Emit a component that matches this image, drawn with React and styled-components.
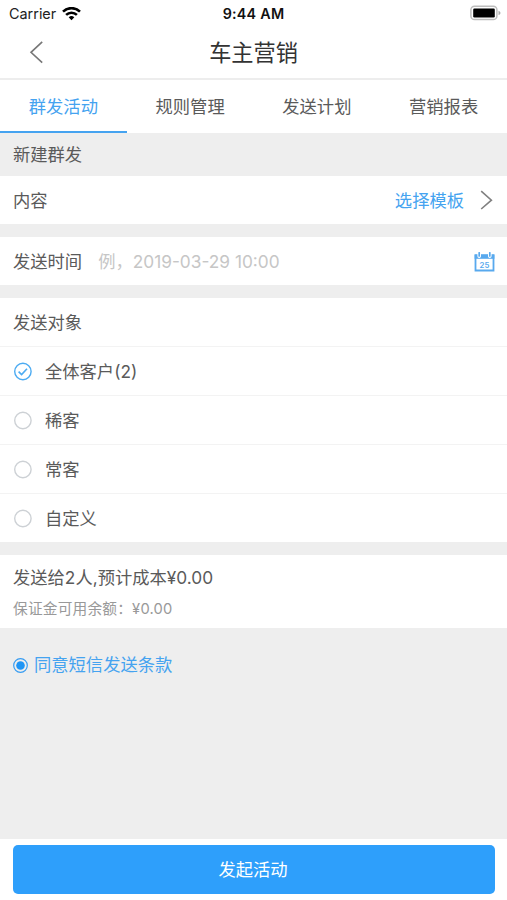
import { useState } from 'react'
import styled, { createGlobalStyle, ThemeProvider } from 'styled-components'

const theme = {
  colors: {
    primary: '#2e9ffb',
    link: '#45a3f0',
    fg: '#5a5a5a',
    muted: '#999',
    placeholder: '#c6c6c6',
    bg: '#eee',
    line: '#f3f3f3',
  },
}

const GlobalStyle = createGlobalStyle`
  * {
    box-sizing: border-box;
  }

  body {
    margin: 0;
    font-family: Inter, 'Noto Sans CJK SC', sans-serif;
  }
`

const StyledPage = styled.div`
  display: flex;
  flex-direction: column;

  height: 900px;
  overflow: hidden;

  font-size: 17.3px;
  line-height: 26px;
  white-space: nowrap;

  color: ${({ theme }) => theme.colors.fg};
  background: ${({ theme }) => theme.colors.bg};

  svg {
    display: block;
    flex: none;
  }
`

const StyledStatusBar = styled.div`
  display: grid;
  grid-template-columns: 1fr auto 1fr;
  align-items: center;

  height: 27px;
  padding: 0 6px 0 9px;

  font-size: 14.4px;
  color: #222;
  background: #fff;
`

const StyledCarrier = styled.div`
  display: flex;
  align-items: center;
  gap: 6px;
`

const StyledClock = styled.div`
  margin-right: 3px;

  font-size: 14.3px;
  font-weight: 600;
  letter-spacing: 0.25px;
  color: #111;
`

const StyledBattery = styled.div`
  justify-self: end;
  margin-top: -1px;
`

const StyledHeader = styled.header`
  display: grid;
  grid-template-columns: 60px 1fr 60px;
  align-items: center;

  height: 53px;
  border-bottom: 2px solid #ededed;

  background: #fff;
`

const StyledBack = styled.div`
  padding-left: 29px;
  margin-top: -2px;
`

const StyledTitle = styled.h1`
  margin: 0;

  font-size: 22.2px;
  font-weight: 400;
  line-height: 32px;
  text-align: center;

  color: #333;
`

const StyledTabs = styled.nav`
  display: grid;
  grid-template-columns: repeat(4, 1fr);

  height: 53px;

  background: #fff;
`

const StyledTab = styled.div`
  display: flex;
  align-items: center;
  justify-content: center;

  padding-top: 2px;
  border-bottom: 2px solid ${({ theme, $active }) => ($active ? theme.colors.link : 'transparent')};

  color: ${({ theme, $active }) => ($active ? theme.colors.link : theme.colors.fg)};
`

const StyledSectionLabel = styled.div`
  display: flex;
  align-items: center;

  height: 43px;
  padding: 0 13px;
`

const StyledGroup = styled.section`
  margin-bottom: ${({ $gap }) => $gap}px;

  background: #fff;
`

const StyledRow = styled.div`
  display: flex;
  align-items: center;

  height: ${({ $height = 48 }) => $height}px;
  padding: 2px ${({ $right = 13 }) => $right}px 0 13px;

  & + & {
    border-top: 1px solid ${({ theme }) => theme.colors.line};
  }
`

const StyledLink = styled.span`
  margin: 0 16px 0 auto;

  color: ${({ theme }) => theme.colors.link};
`

const StyledPlaceholder = styled.span`
  flex: 1;
  margin-left: 16px;

  color: ${({ theme }) => theme.colors.placeholder};
`

const StyledRowIcon = styled.span`
  margin-bottom: 2px;
`

const StyledOptionText = styled.span`
  margin-left: 13px;
`

const StyledSummary = styled.section`
  height: 73px;
  padding: 10px 13px 0;

  background: #fff;
`

const StyledBalance = styled.div`
  margin-top: 6px;

  font-size: 14.7px;
  line-height: 24px;
  letter-spacing: 0.2px;

  color: ${({ theme }) => theme.colors.muted};
`

const StyledTerms = styled.div`
  display: flex;
  align-items: center;
  gap: 6px;

  padding: 24px 13px 0;

  color: ${({ theme }) => theme.colors.link};
`

const StyledFooter = styled.footer`
  height: 61px;
  margin-top: auto;
  padding: 6px 12px 6px 13px;

  background: #fff;
`

const StyledButton = styled.button`
  display: block;

  width: 100%;
  height: 49px;
  padding: 0 2px 0 0;
  border: 0;
  border-radius: 5px;

  font: inherit;

  color: #fff;
  background: ${({ theme }) => theme.colors.primary};
`

function WifiIcon() {
  return (
    <svg width="19" height="14" viewBox="0 0 19 14" fill="none" stroke="#000" strokeWidth="2.6">
      <path d="M1 4.6a12.2 12.2 0 0 1 17 0" />
      <path d="M4.1 7.9a7.8 7.8 0 0 1 10.8 0" />
      <path d="M6.7 10.3a4 4 0 0 1 5.6 0L9.5 13.2z" fill="#000" stroke="none" />
    </svg>
  )
}

function BatteryIcon() {
  return (
    <svg width="31" height="16" viewBox="0 0 31 16">
      <rect x="0.9" y="1.2" width="26" height="13.4" rx="3.6" fill="#fff" stroke="#bdbdbd" strokeWidth="1.5" />
      <rect x="3.2" y="3.5" width="21.6" height="9" rx="1.2" fill="#000" />
      <path d="M28.5 5.8c2.6.8 2.6 3.4 0 4.2z" fill="#aaa" />
    </svg>
  )
}

function ChevronIcon({ left }) {
  return left ? (
    <svg width="15" height="24" viewBox="0 0 15 24" fill="none" stroke="#777" strokeWidth="1.6">
      <path d="M13.2 1.8 2 12.3l11.2 10.4" />
    </svg>
  ) : (
    <svg width="13" height="20" viewBox="0 0 13 20" fill="none" stroke="#808080" strokeWidth="1.6">
      <path d="M1.2 1.2 11.4 10.2 1.2 19" />
    </svg>
  )
}

function CalendarIcon() {
  return (
    <svg width="21" height="20" viewBox="0 0 21 20">
      <path d="M1.5 3.5h18v15h-18z" fill="#fff" stroke="#58a9ee" strokeWidth="1.8" />
      <path d="M.6 2.4h19.8v4.4H.6z" fill="#58a9ee" />
      <path d="M5.2 0v4.2M15.8 0v4.2" stroke="#fff" strokeWidth="3.6" strokeLinecap="round" />
      <path d="M5.2 .8v3.2M15.8 .8v3.2" stroke="#58a9ee" strokeWidth="1.7" strokeLinecap="round" />
      <text x="10.5" y="15.6" textAnchor="middle" fontSize="7.8" fontWeight="600" fill="#58a9ee">
        25
      </text>
    </svg>
  )
}

function RadioIcon({ checked }) {
  return (
    <svg width="19" height="19" viewBox="0 0 19 19" fill="none">
      <circle cx="9.9" cy="9.5" r="8.2" stroke={checked ? '#4cabf2' : '#cdd1d5'} strokeWidth="1.4" />
      {checked && <path d="m5.6 9.7 3 2.9 5.4-5.8" stroke="#4cabf2" strokeWidth="1.6" />}
    </svg>
  )
}

function TermsIcon() {
  return (
    <svg width="15" height="15" viewBox="0 0 15 15">
      <circle cx="7.5" cy="7.5" r="6.8" fill="none" stroke="#369cf2" strokeWidth="1.2" />
      <circle cx="7.5" cy="7.5" r="4.3" fill="#1f95f5" />
    </svg>
  )
}

const tabs = ['群发活动', '规则管理', '发送计划', '营销报表']
const targets = ['全体客户(2)', '稀客', '常客', '自定义']

function App() {
  const [tab, setTab] = useState(0)
  const [target, setTarget] = useState(0)

  return (
    <ThemeProvider theme={theme}>
      <GlobalStyle />
      <StyledPage>
        <StyledStatusBar>
          <StyledCarrier>
            Carrier
            <WifiIcon />
          </StyledCarrier>
          <StyledClock>9:44 AM</StyledClock>
          <StyledBattery>
            <BatteryIcon />
          </StyledBattery>
        </StyledStatusBar>
        <StyledHeader>
          <StyledBack>
            <ChevronIcon left />
          </StyledBack>
          <StyledTitle>车主营销</StyledTitle>
        </StyledHeader>
        <StyledTabs>
          {tabs.map((label, i) => (
            <StyledTab key={label} $active={i === tab} onClick={() => setTab(i)}>
              {label}
            </StyledTab>
          ))}
        </StyledTabs>
        <StyledSectionLabel>新建群发</StyledSectionLabel>
        <StyledGroup $gap={13}>
          <StyledRow $right={14}>
            内容
            <StyledLink>选择模板</StyledLink>
            <StyledRowIcon>
              <ChevronIcon />
            </StyledRowIcon>
          </StyledRow>
        </StyledGroup>
        <StyledGroup $gap={13}>
          <StyledRow $right={12}>
            发送时间
            <StyledPlaceholder>例，2019-03-29 10:00</StyledPlaceholder>
            <CalendarIcon />
          </StyledRow>
        </StyledGroup>
        <StyledGroup $gap={13}>
          <StyledRow>发送对象</StyledRow>
          {targets.map((label, i) => (
            <StyledRow key={label} $height={49} onClick={() => setTarget(i)}>
              <StyledRowIcon>
                <RadioIcon checked={i === target} />
              </StyledRowIcon>
              <StyledOptionText>{label}</StyledOptionText>
            </StyledRow>
          ))}
        </StyledGroup>
        <StyledSummary>
          <div>发送给2人,预计成本¥0.00</div>
          <StyledBalance>保证金可用余额：¥0.00</StyledBalance>
        </StyledSummary>
        <StyledTerms>
          <TermsIcon />
          同意短信发送条款
        </StyledTerms>
        <StyledFooter>
          <StyledButton type="button">发起活动</StyledButton>
        </StyledFooter>
      </StyledPage>
    </ThemeProvider>
  )
}

export default App
